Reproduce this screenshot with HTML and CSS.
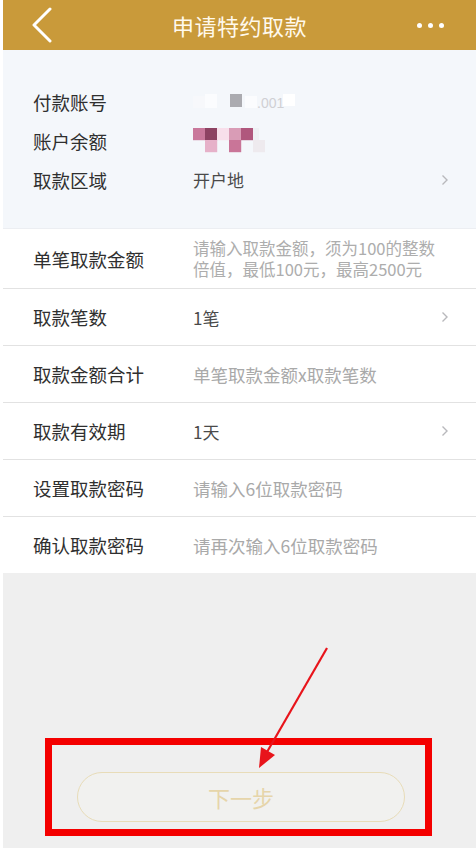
FILE: index.html
```html
<!DOCTYPE html>
<html lang="zh-CN">
<head>
<meta charset="utf-8">
<title>申请特约取款</title>
<link rel="stylesheet" href="styles.css">
</head>
<body>
<div class="app">
  <header class="topbar">
    <div class="back">
      <svg width="22" height="36" viewBox="0 0 22 36"><path d="M19 2 L3 18 L19 34" fill="none" stroke="#fff" stroke-width="3" stroke-linecap="round" stroke-linejoin="round"/></svg>
    </div>
    <h1 class="title">申请特约取款</h1>
    <div class="more"><span class="dot"></span><span class="dot"></span><span class="dot"></span></div>
  </header>

  <section class="info">
    <div class="info-row">
      <span class="label">付款账号</span>
      <span class="value">
        <svg width="110" height="20" viewBox="0 0 110 20">
          <rect x="0" y="4" width="12" height="12" fill="#f7f8fb"/>
          <rect x="12" y="2" width="12" height="14" fill="#fbfcfe"/>
          <rect x="37" y="2" width="12" height="13" fill="#ababb0"/>
          <rect x="52" y="4" width="12" height="12" fill="#fbfcfe"/>
          <rect x="90" y="2" width="12" height="12" fill="#ffffff"/>
          <text x="64" y="16" font-size="14" fill="#d0d0d4" font-family="Liberation Sans, sans-serif">.001</text>
        </svg>
      </span>
      <span class="chev-space"></span>
    </div>
    <div class="info-row">
      <span class="label">账户余额</span>
      <span class="value">
        <svg width="80" height="26" viewBox="0 0 80 26">
          <rect x="0" y="0" width="12.2" height="12.2" fill="#c9789b"/>
          <rect x="12" y="0" width="12.2" height="12.2" fill="#8d4262"/>
          <rect x="24" y="0" width="12.2" height="12.2" fill="#f8dfeb"/>
          <rect x="36" y="0" width="12.2" height="12.2" fill="#d99cb6"/>
          <rect x="48" y="0" width="12.2" height="12.2" fill="#b0577d"/>
          <rect x="60" y="0" width="6" height="12.2" fill="#eef0f4"/>
          <rect x="12" y="12" width="12.2" height="12.2" fill="#e6b1c9"/>
          <rect x="36" y="12" width="12.2" height="12.2" fill="#c97598"/>
          <rect x="60" y="12" width="12" height="12.2" fill="#eeeaee"/>
        </svg>
      </span>
      <span class="chev-space"></span>
    </div>
    <div class="info-row">
      <span class="label">取款区域</span>
      <span class="value">开户地</span>
      <svg class="chev" width="8" height="12" viewBox="0 0 8 12"><path d="M1.5 1.5 L6 6 L1.5 10.5" fill="none" stroke="#b8b8bc" stroke-width="1.4"/></svg>
    </div>
  </section>

  <section class="form">
    <div class="form-row tall">
      <span class="label">单笔取款金额</span>
      <span class="placeholder small"><span class="line">请输入取款金额，须为100的整数</span><span class="line">倍值，最低100元，最高2500元</span></span>
    </div>
    <div class="form-row">
      <span class="label">取款笔数</span>
      <span class="value">1笔</span>
      <svg class="chev" width="8" height="12" viewBox="0 0 8 12"><path d="M1.5 1.5 L6 6 L1.5 10.5" fill="none" stroke="#b8b8bc" stroke-width="1.4"/></svg>
    </div>
    <div class="form-row">
      <span class="label">取款金额合计</span>
      <span class="placeholder">单笔取款金额x取款笔数</span>
    </div>
    <div class="form-row">
      <span class="label">取款有效期</span>
      <span class="value">1天</span>
      <svg class="chev" width="8" height="12" viewBox="0 0 8 12"><path d="M1.5 1.5 L6 6 L1.5 10.5" fill="none" stroke="#b8b8bc" stroke-width="1.4"/></svg>
    </div>
    <div class="form-row">
      <span class="label">设置取款密码</span>
      <span class="placeholder">请输入6位取款密码</span>
    </div>
    <div class="form-row last">
      <span class="label">确认取款密码</span>
      <span class="placeholder">请再次输入6位取款密码</span>
    </div>
  </section>

  <div class="actions">
    <button class="next" type="button">下一步</button>
  </div>

  <div class="mark-box"></div>
  <svg class="mark-arrow" width="90" height="130" viewBox="0 0 90 130">
    <line x1="86" y1="2" x2="26" y2="106" stroke="#e8141b" stroke-width="2.2"/>
    <polygon points="18,122 20,101 34,109" fill="#e8141b"/>
  </svg>
</div>
</body>
</html>
```

FILE: styles.css
```css
* { box-sizing: border-box; }
html, body { margin: 0; padding: 0; }
body {
  background: #ffffff;
  padding-left: 3px;
  font-family: "Noto Sans CJK SC", "Noto Sans", sans-serif;
}
.app {
  position: relative;
  width: 473px;
  min-height: 848px;
  background: #efefef;
  overflow: hidden;
}
.topbar {
  height: 50px;
  background: #c99a3a;
  display: grid;
  grid-template-columns: 1fr auto 1fr;
  align-items: center;
}
.back {
  padding-left: 28px;
  display: flex;
  align-items: center;
  height: 50px;
}
.title {
  margin: 0;
  font-size: 22px;
  font-weight: 400;
  color: #fff9ec;
  letter-spacing: 0.5px;
}
.more {
  justify-self: end;
  padding-right: 32px;
  display: flex;
  gap: 6px;
  align-items: center;
}
.dot {
  width: 5px;
  height: 5px;
  border-radius: 50%;
  background: #ffffff;
}
.info {
  background: #f4f7fb;
  padding: 32px 0 29px 30px;
  border-bottom: 1px solid #eceef2;
}
.info-row {
  height: 39px;
  display: flex;
  align-items: center;
}
.label {
  width: 160px;
  flex: none;
  font-size: 18.5px;
  color: #2f2f2f;
}
.value {
  flex: 1;
  font-size: 17px;
  color: #4a4a4a;
  display: flex;
  align-items: center;
}
.chev { margin-right: 27px; flex: none; }
.chev-space { width: 8px; margin-right: 27px; }
.form {
  background: #ffffff;
}
.form-row {
  height: 57px;
  display: flex;
  align-items: center;
  padding-left: 30px;
  border-bottom: 1px solid #e2e2e2;
}
.form-row.tall { height: 60px; }
.form-row.last { border-bottom: none; height: 56px; }
.placeholder {
  flex: 1;
  font-size: 17.5px;
  color: #a9a9a9;
}
.placeholder.small {
  display: flex;
  flex-direction: column;
  font-size: 16.5px;
  color: #adadad;
}
.placeholder.small .line {
  display: block;
  height: 21px;
  line-height: 21px;
  white-space: nowrap;
}
.actions {
  padding-top: 199px;
  display: flex;
  justify-content: flex-start;
  padding-left: 74px;
}
.next {
  width: 328px;
  height: 50px;
  border-radius: 25px;
  border: 1px solid #e8dcb8;
  background: #f1f1ef;
  color: #e6d5aa;
  font-family: "Noto Sans CJK SC", sans-serif;
  font-size: 22px;
  letter-spacing: 0;
}
.mark-box {
  position: absolute;
  left: 42px;
  top: 738px;
  width: 387px;
  height: 98px;
  border: 7px solid #f40000;
}
.mark-arrow {
  position: absolute;
  left: 238px;
  top: 646px;
}
```
